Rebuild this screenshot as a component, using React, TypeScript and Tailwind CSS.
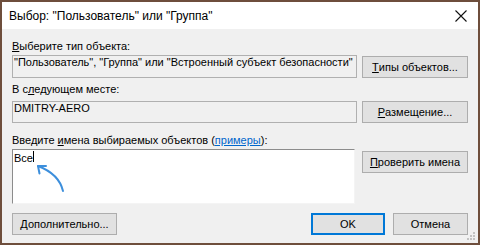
import React from "react";

function Btn({
  children,
  className = "",
  primary = false,
}: {
  children: React.ReactNode;
  className?: string;
  primary?: boolean;
}) {
  return (
    <div
      className={
        "h-[22px] flex items-center justify-center bg-[#e1e1e1] border leading-[13px] " +
        (primary
          ? "border-[#0078d7] shadow-[inset_0_0_0_1px_#0078d7] "
          : "border-[#adadad] ") +
        className
      }
    >
      {children}
    </div>
  );
}

export default function App() {
  return (
    <div className="relative w-[480px] h-[245px] overflow-hidden border-2 border-[#6e4e3c] bg-[#f0f0f0] flex flex-col text-[11px] text-black font-['Liberation_Sans',Arial,sans-serif]">
      {/* Title bar */}
      <div className="h-[27px] shrink-0 bg-white flex items-center justify-between pl-[7px] pr-[11px]">
        <span className="text-[12px] leading-[16px] font-['Liberation_Sans',Arial,sans-serif] text-[#000]">
          Выбор: "Пользователь" или "Группа"
        </span>
        <svg width="12" height="12" viewBox="0 0 12 12" className="mt-[1px]">
          <path d="M0.5 0.5 L11.5 11.5 M11.5 0.5 L0.5 11.5" stroke="#111" strokeWidth="1.1" fill="none" />
        </svg>
      </div>

      {/* Body */}
      <div className="flex flex-col pl-[10px] pr-[10px]">
        <div className="mt-[11px] h-[13px] leading-[13px]">
          <span className="underline">В</span>ыберите тип объекта:
        </div>
        <div className="mt-[2px] flex items-end gap-[5px]">
          <div className="flex-1 h-[23px] border border-[#b0b0b0] bg-[#f0f0f0] pl-[1px] leading-[13px] whitespace-nowrap overflow-hidden">
            "Пользователь", "Группа" или "Встроенный субъект безопасности"
          </div>
          <Btn className="w-[106px]">
            <span className="underline">Т</span>ипы объектов...
          </Btn>
        </div>

        <div className="mt-[5px] h-[13px] leading-[13px]">
          В с<span className="underline">л</span>едующем месте:
        </div>
        <div className="mt-[5px] flex items-start gap-[5px]">
          <div className="flex-1 h-[22px] border border-[#b0b0b0] bg-[#f0f0f0] pl-[1px] leading-[13px]">
            DMITRY-AERO
          </div>
          <Btn className="w-[106px]">
            <span className="underline">Р</span>азмещение...
          </Btn>
        </div>

        <div className="mt-[11px] h-[13px] leading-[13px]">
          Введите <span className="underline">и</span>мена выбираемых объектов (
          <span className="text-[#0066cc] underline">примеры</span>):
        </div>
        <div className="mt-[2px] flex items-start gap-[7px]">
          <div className="flex-1 h-[55px] bg-white border-t border-l border-t-[#8c8c8c] border-l-[#8c8c8c] border-r border-b border-r-[#f4f4f4] border-b-[#f4f4f4] pl-[1px] pt-[2px] leading-[13px]">
            <span>Все</span>
            <span className="inline-block align-top w-px h-[11px] -mt-[1px] bg-black ml-[0px]" />
          </div>
          <Btn className="mt-[2px] w-[106px]">
            <span className="underline">П</span>роверить имена
          </Btn>
        </div>

        <div className="mt-[9px] flex items-center">
          <Btn className="w-[105px]">Дополнительно...</Btn>
          <div className="flex-1" />
          <Btn primary className="w-[74px]">
            OK
          </Btn>
          <Btn className="ml-[8px] w-[75px]">Отмена</Btn>
        </div>
      </div>

      {/* Blue arrow annotation */}
      <svg
        className="absolute left-0 top-0 pointer-events-none"
        width="480"
        height="245"
        viewBox="0 0 480 245"
      >
        <path
          d="M61 189 Q57 172 36 164"
          stroke="#3d8fdc"
          strokeWidth="2"
          fill="none"
          strokeLinecap="round"
        />
        <path
          d="M44 164 L36 164 L37.5 171.5"
          stroke="#3d8fdc"
          strokeWidth="2"
          fill="none"
          strokeLinecap="round"
          strokeLinejoin="round"
        />
      </svg>

      {/* Resize grip */}
      <svg className="absolute right-[3px] bottom-[3px]" width="8" height="8" viewBox="0 0 8 8">
        <rect x="6" y="0" width="2" height="2" fill="#c2c2c2" />
        <rect x="3" y="3" width="2" height="2" fill="#c2c2c2" />
        <rect x="6" y="3" width="2" height="2" fill="#c2c2c2" />
        <rect x="0" y="6" width="2" height="2" fill="#c2c2c2" />
        <rect x="3" y="6" width="2" height="2" fill="#c2c2c2" />
        <rect x="6" y="6" width="2" height="2" fill="#c2c2c2" />
      </svg>
    </div>
  );
}
